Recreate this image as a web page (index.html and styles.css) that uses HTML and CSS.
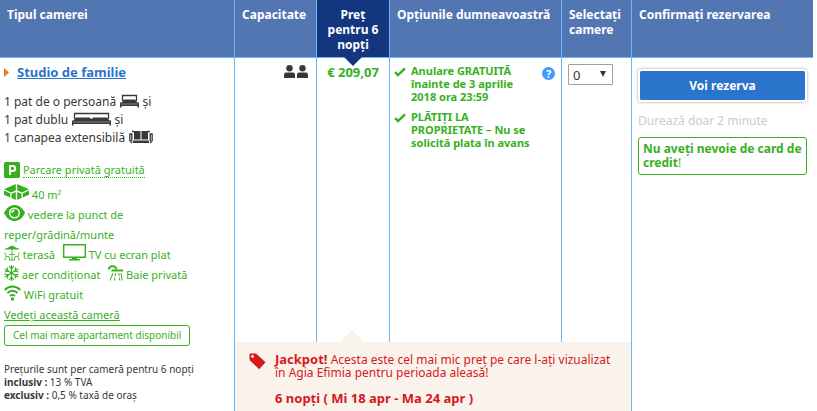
FILE: index.html
```html
<!DOCTYPE html>
<html lang="ro">
<head>
    <meta charset="UTF-8">
    <meta name="viewport" content="width=device-width, initial-scale=1.0">
    <title>Studio de familie</title>
    <link rel="stylesheet" href="styles.css">
</head>
<body>
    <table class="rooms">
        <colgroup>
            <col class="col-type">
            <col class="col-capacity">
            <col class="col-price">
            <col class="col-options">
            <col class="col-select">
            <col class="col-confirm">
        </colgroup>
        <thead>
            <tr>
                <th>Tipul camerei</th>
                <th>Capacitate</th>
                <th class="price-head">Preţ pentru 6 nopţi</th>
                <th>Opțiunile dumneavoastră</th>
                <th class="select-head">Selectaţi camere</th>
                <th>Confirmați rezervarea</th>
            </tr>
        </thead>
        <tbody>
            <tr class="offer">
                <td class="type" rowspan="2">
                    <h2 class="room-name">
                        <svg width="5" height="9" viewBox="0 0 5 9"><path d="M0 0l5 4.5L0 9z" fill="#eb7c14"/></svg>
                        <a href="#">Studio de familie</a>
                    </h2>
                    <ul class="beds">
                        <li>1 pat de o persoană
                            <svg width="19" height="14" viewBox="0 0 19 14"><path d="M2.500 7V1.500h14V7" fill="none" stroke="#383838" stroke-width="1.300"/><path d="M4 5.500h11l2.500 3H19v5h-1.500V12h-16v1.500H0v-5h1.500z" fill="#383838"/><path d="M1 10h17" stroke="#999" stroke-width=".8"/></svg>
                            şi</li>
                        <li>1 pat dublu
                            <svg width="39" height="14" viewBox="0 0 39 14"><path d="M2.500 7V1.500h34V7" fill="none" stroke="#383838" stroke-width="1.300"/><path d="M4 5.500h13.500l2 1.500 2-1.500H35l2.500 3H39v5h-1.500V12h-36v1.500H0v-5h1.500z" fill="#383838"/><path d="M1 10h37" stroke="#999" stroke-width=".8"/></svg>
                            şi</li>
                        <li>1 canapea extensibilă
                            <svg width="24" height="14" viewBox="0 0 24 14"><path d="M5 1h6.500v8.500H5zM12.500 1H19v8.500h-6.500zM4 10.500h16V13H4z" fill="#383838"/><path d="M5 1.500H3M19 1.500h2M.8 3.500v7L3 13M23.200 3.500v7L21 13M.8 4h2v7M23.200 4h-2v7" fill="none" stroke="#383838" stroke-width="1.300"/></svg>
                        </li>
                    </ul>
                    <ul class="facilities">
                        <li class="parking">
                            <svg width="16" height="16" viewBox="0 0 16 16"><rect width="16" height="16" rx="1.500" fill="#37b01e"/><path d="M6 13V4h2.700a2.300 2.300 0 0 1 0 5H6" fill="none" stroke="#fff" stroke-width="2"/></svg>
                            <span class="dotted">Parcare privată gratuită</span></li>
                        <li>
                            <svg width="25" height="17" viewBox="0 0 25 17"><g fill="#37b01e"><path d="M11.800 0v6.500L7 8.500 0 5.200zM13.200 0v6.500l4.800 2 7-3.300zM0 6.500l6.300 3v4L0 10.700zM25 6.500l-6.300 3v4l6.300-2.800zM7.500 9.700l4.300-1.800V16l-4.300-2zM17.500 9.700l-4.300-1.800V16l4.300-2z"/></g></svg>
                            40 m²</li>
                        <li>
                            <svg width="21" height="16" viewBox="0 0 21 16"><path d="M0 8C5-2.700 16-2.700 21 8 16 18.700 5 18.700 0 8z" fill="#37b01e"/><circle cx="10.500" cy="8" r="4.800" fill="none" stroke="#fff" stroke-width="1.500"/><path d="M10.500 5.500A2.500 2.500 0 0 0 8 8" fill="none" stroke="#fff" stroke-width="1.300"/></svg>
                            vedere la punct de reper/grădină/munte</li>
                        <li>
                            <svg width="16" height="16" viewBox="0 0 16 16"><path d="M0 4.500C2 3 5 2.500 7.500.8h1C11 2.500 14 3 16 4.500z" fill="#37b01e"/><path d="M8 4v11M5 9.500h6M5.500 15.200h5M.7 7.500L2 11.500h3l.8 4M2 11.500L.8 15.500M15.300 7.500L14 11.500h-3l-.8 4M14 11.500l1.200 4" fill="none" stroke="#37b01e" stroke-width=".8"/></svg>
                            terasă
                            <svg class="next" width="23" height="17" viewBox="0 0 23 17"><path d="M.7.700h21.600v12.600H.7z" fill="none" stroke="#37b01e" stroke-width="1.400"/><path d="M9 13h5v2h3v1.500H6V15h3z" fill="#37b01e"/></svg>
                            TV cu ecran plat</li>
                        <li>
                            <svg width="15" height="16" viewBox="0 0 15 16"><g fill="none" stroke="#37b01e" stroke-width="1.200"><path d="M7.500 0v16M.7 4l13.600 8M.7 12l13.600-8"/><path d="M5 1.200l2.500 2.500L10 1.200M5 14.800l2.500-2.500 2.500 2.500M3.200 2.500l.8 3.500-3.500 1M11.800 13.500L11 10l3.500-1M11.800 2.500L11 6l3.500 1M3.200 13.500L4 10 .5 9"/></g></svg>
                            aer condiţionat
                            <svg class="next" width="15" height="16" viewBox="0 0 15 16"><path d="M.8 4.500C1 .2 7.500-.2 8.500 4.500" fill="none" stroke="#37b01e" stroke-width="1.800"/><path d="M3.500 5.500H15" stroke="#37b01e" stroke-width="2"/><path d="M5 8l-3 7.500M7.700 8l-.5 3M6.800 12.500l-.3 3M10.800 8l.4 3M11.500 12.500l.2 3M13 8l1.300 7.500" stroke="#37b01e" fill="none"/></svg>
                            Baie privată</li>
                        <li>
                            <svg width="17" height="16" viewBox="0 0 17 16"><g fill="none" stroke="#37b01e" stroke-width="1.900"><path d="M.8 5c4.400-4.600 11-4.600 15.400 0"/><path d="M3.500 8c3-3 7-3 10 0"/><path d="M6 11c1.500-1.500 3.500-1.500 5 0"/></g><circle cx="8.500" cy="14" r="1.700" fill="#37b01e"/></svg>
                            WiFi gratuit</li>
                    </ul>
                    <a class="see-room" href="#">Vedeți această cameră</a>
                    <div class="badge">Cel mai mare apartament disponibil</div>
                    <p class="taxes">
                        Prețurile sunt per cameră pentru 6 nopţi<br>
                        <b>inclusiv :</b> 13 % TVA<br>
                        <b>exclusiv :</b> 0,5 % taxă de oraş
                    </p>
                </td>
                <td class="capacity">
                    <svg width="25" height="14" viewBox="0 0 25 14"><g fill="#383838"><circle cx="5.500" cy="3.200" r="3.200"/><path d="M0 13V9.500Q0 7.500 2 7.500h7q2 0 2 2V13z"/><circle cx="18.500" cy="3.200" r="3.200"/><path d="M13 13V9.500q0-2 2-2h7q2 0 2 2V13z"/></g></svg>
                </td>
                <td class="price">€ 209,07</td>
                <td class="options">
                    <ul class="perks">
                        <li>
                            <svg width="12" height="10" viewBox="0 0 12 10"><path d="M1 5.200l3 2.800L11 1.300" fill="none" stroke="#37b01e" stroke-width="2.400"/></svg>
                            <span>Anulare GRATUITĂ înainte de 3 aprilie 2018 ora 23:59</span>
                            <button class="help" aria-label="Detalii">?</button>
                        </li>
                        <li>
                            <svg width="12" height="10" viewBox="0 0 12 10"><path d="M1 5.200l3 2.800L11 1.300" fill="none" stroke="#37b01e" stroke-width="2.400"/></svg>
                            <span>PLĂTIȚI LA PROPRIETATE – Nu se solicită plata în avans</span>
                        </li>
                    </ul>
                </td>
                <td class="select">
                    <select aria-label="Selectaţi camere">
                        <option>0</option>
                        <option>1</option>
                    </select>
                </td>
                <td class="confirm" rowspan="2">
                    <button class="reserve">Voi rezerva</button>
                    <p class="duration">Durează doar 2 minute</p>
                    <p class="no-card"><b>Nu aveţi nevoie de card de credit</b>!</p>
                </td>
            </tr>
            <tr>
                <td class="jackpot" colspan="4">
                    <div class="jackpot-body">
                        <svg width="17" height="17" viewBox="0 0 17 17"><path d="M1 .5h6l9.500 8.700-6.300 7L.5 7V1z" fill="#d7181f"/><circle cx="3.500" cy="3.500" r="1.400" fill="#faf3ec"/></svg>
                        <div>
                            <p><b>Jackpot!</b> Acesta este cel mai mic preț pe care l-ați vizualizat în Agia Efimia pentru perioada aleasă!</p>
                            <p class="dates">6 nopți ( Mi 18 apr - Ma 24 apr )</p>
                        </div>
                    </div>
                </td>
            </tr>
        </tbody>
    </table>
</body>
</html>
```
FILE: styles.css
```css
body {
    margin: 0;
    padding-right: 4px;
    background: #fff;
    color: #383838;
    font-family: "Noto Sans", "Open Sans", sans-serif;
    font-size: 12px;
    overflow: hidden;
}
ul, p, h2 {
    margin: 0;
    padding: 0;
    list-style: none;
}
.rooms {
    width: 100%;
    table-layout: fixed;
    border-spacing: 0;
}
.col-type { width: 234px; }
.col-capacity { width: 82px; }
.col-price { width: 73px; }
.col-options { width: 172px; }
.col-select { width: 70px; }
th {
    padding: 7px 7px 5px;
    background: #5276b1;
    color: #fff;
    font-size: 12px;
    line-height: 15px;
    text-align: left;
    vertical-align: top;
    border-bottom: 1px solid #6bb5f9;
}
td {
    padding: 0;
    vertical-align: top;
}
th + th, td + td, .jackpot {
    border-left: 1px solid #6bb5f9;
}
.price-head {
    position: relative;
    background: #13367f;
    text-align: center;
}
.price-head::after {
    content: "";
    position: absolute;
    top: 100%;
    left: 50%;
    margin-left: -9px;
    border: 9px solid transparent;
    border-top-color: #13367f;
    border-bottom: 0;
}
.select-head {
    padding-right: 0;
}
.offer {
    height: 284px;
}

/* room type */
.type {
    padding: 4px;
}
.room-name {
    display: flex;
    align-items: center;
    gap: 8px;
    font-size: 13px;
    line-height: 21px;
}
.room-name a {
    color: #2a74cb;
}
.beds {
    margin-top: 10px;
    line-height: 18px;
}
.beds svg {
    margin-left: 1px;
    vertical-align: -2px;
}
.facilities {
    margin-top: 13px;
    color: #37b01e;
    font-size: 11px;
    line-height: 20px;
}
.facilities svg {
    margin-top: -6px;
    vertical-align: -2px;
}
.facilities .parking {
    margin-bottom: 5px;
}
.facilities .parking svg {
    vertical-align: -4px;
}
.dotted {
    border-bottom: 1px dotted #37b01e;
}
.facilities .next {
    margin-left: 5px;
}
.see-room {
    color: #37b01e;
    font-size: 11px;
    line-height: 20px;
}
.badge {
    width: fit-content;
    padding: 0 8px;
    border: 1px solid #37b01e;
    border-radius: 3px;
    color: #37b01e;
    font-size: 10px;
    line-height: 19px;
}
.taxes {
    margin-top: 17px;
    font-size: 10px;
    line-height: 13px;
}

/* offer */
.capacity {
    padding: 7px 7px 0;
    text-align: right;
}
.price {
    padding-top: 5px;
    color: #37b01e;
    font-size: 13px;
    font-weight: bold;
    line-height: 18px;
    text-align: center;
}
.options {
    padding: 6px 6px 0 4px;
}
.perks li {
    display: flex;
    align-items: flex-start;
    gap: 5px;
    margin-bottom: 7px;
    color: #37b01e;
    font-size: 11px;
    font-weight: bold;
    line-height: 13px;
}
.perks svg {
    flex: none;
    margin-top: 3px;
}
.perks span {
    flex: 1;
    max-width: 125px;
}
.help {
    width: 13px;
    height: 13px;
    margin-top: 3px;
    margin-left: auto;
    padding: 0;
    border: 0;
    border-radius: 50%;
    background: #3b9bff;
    color: #fff;
    font: bold 11px/13px "Noto Sans", sans-serif;
}
.select {
    padding: 6px 6px 0;
}
.select select {
    width: 45px;
    height: 21px;
    padding: 0 4px;
    appearance: none;
    border: 1px solid #a0a0a0;
    border-radius: 1px;
    background: url("data:image/svg+xml,%3Csvg xmlns='http://www.w3.org/2000/svg' viewBox='0 0 6 6'%3E%3Cpath d='M0 0h6L3 6z' fill='%23383838'/%3E%3C/svg%3E") no-repeat right 6px top 6px / 6px 6px;
    color: #383838;
    font: 13px "Noto Sans", sans-serif;
}

/* confirm */
.confirm {
    padding: 11px 6px 0;
}
.reserve {
    display: block;
    width: 100%;
    height: 33px;
    padding: 0;
    border: 2px solid #fff;
    border-radius: 3px;
    background: #2a74cb;
    background-clip: padding-box;
    box-shadow: 0 0 3px #999;
    color: #fff;
    font: bold 12px "Noto Sans", sans-serif;
}
.duration {
    margin-top: 10px;
    color: #ccc;
    font-size: 12px;
    line-height: 18px;
}
.no-card {
    margin-top: 7px;
    padding: 4px;
    border: 1px solid #37b01e;
    border-radius: 3px;
    color: #37b01e;
    font-size: 12px;
    line-height: 14px;
}

/* jackpot */
.jackpot {
    position: relative;
    background: #faf3ec;
    color: #d7181f;
}
.jackpot::before {
    content: "";
    position: absolute;
    bottom: 100%;
    left: 105px;
    border: 12px solid transparent;
    border-bottom-color: #faf3ec;
    border-top: 0;
}
.jackpot-body {
    display: flex;
    gap: 9px;
    padding: 11px 10px 7px 14px;
    font-size: 12px;
    line-height: 13px;
}
.jackpot-body svg {
    flex: none;
}
.jackpot-body b, .dates {
    font-size: 13px;
}
.dates {
    margin-top: 13px;
    font-weight: bold;
}
```
